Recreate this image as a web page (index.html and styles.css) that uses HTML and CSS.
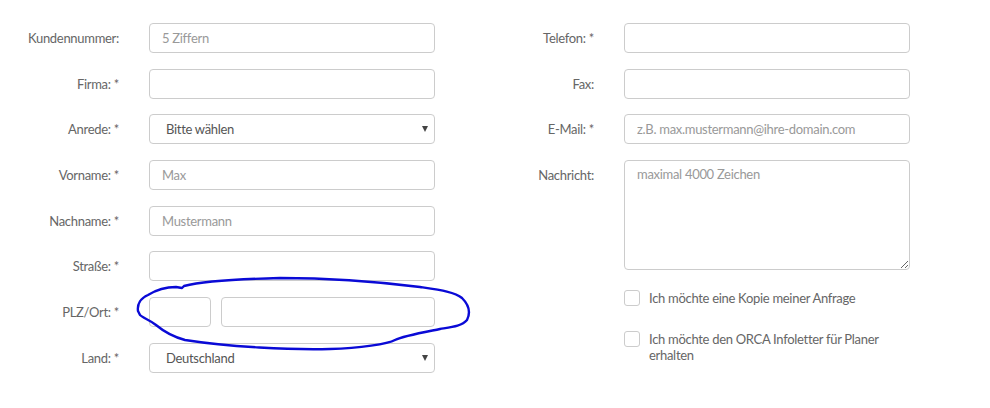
FILE: index.html
```html
<!DOCTYPE html>
<html lang="de">
<head>
    <meta charset="UTF-8">
    <title>Kontaktformular</title>
    <link rel="stylesheet" href="styles.css">
</head>
<body>
<form class="contact-form">
    <div class="form-col">
        <label class="form-label" for="kdnr">Kundennummer:</label>
        <input class="form-input" id="kdnr" type="text" placeholder="5 Ziffern">

        <label class="form-label" for="firma">Firma: *</label>
        <input class="form-input" id="firma" type="text">

        <label class="form-label" for="anrede">Anrede: *</label>
        <div class="select-wrap">
            <select class="form-input form-select" id="anrede">
                <option>Bitte wählen</option>
                <option>Herr</option>
                <option>Frau</option>
            </select>
        </div>

        <label class="form-label" for="vorname">Vorname: *</label>
        <input class="form-input" id="vorname" type="text" placeholder="Max">

        <label class="form-label" for="nachname">Nachname: *</label>
        <input class="form-input" id="nachname" type="text" placeholder="Mustermann">

        <label class="form-label" for="strasse">Straße: *</label>
        <input class="form-input" id="strasse" type="text">

        <label class="form-label" for="plz">PLZ/Ort: *</label>
        <div class="plz-ort">
            <input class="form-input plz" id="plz" type="text">
            <input class="form-input" id="ort" type="text">
        </div>

        <label class="form-label" for="land">Land: *</label>
        <div class="select-wrap">
            <select class="form-input form-select" id="land">
                <option>Deutschland</option>
                <option>Österreich</option>
                <option>Schweiz</option>
            </select>
        </div>
    </div>

    <div class="form-col">
        <label class="form-label" for="telefon">Telefon: *</label>
        <input class="form-input" id="telefon" type="text">

        <label class="form-label" for="fax">Fax:</label>
        <input class="form-input" id="fax" type="text">

        <label class="form-label" for="email">E-Mail: *</label>
        <input class="form-input" id="email" type="email" placeholder="z.B. max.mustermann@ihre-domain.com">

        <label class="form-label" for="nachricht">Nachricht:</label>
        <textarea class="form-input form-textarea" id="nachricht" placeholder="maximal 4000 Zeichen"></textarea>

        <div class="checks">
            <label class="check-row">
                <input class="check-box" type="checkbox">
                <span>Ich möchte eine Kopie meiner Anfrage</span>
            </label>
            <label class="check-row">
                <input class="check-box" type="checkbox">
                <span>Ich möchte den ORCA Infoletter für Planer erhalten</span>
            </label>
        </div>
    </div>

    <!-- hand-drawn marker around PLZ/Ort -->
    <svg class="scribble" width="990" height="408" viewBox="0 0 990 408">
        <path d="M138 311 C137 304 141 298 148 295 C156 290 166 287 176 287 L182 288 L184 286
                 C200 282 240 279 280 278 C330 278 380 282 420 287 C440 290 455 292 462 298
                 C468 304 471 312 467 320 C462 326 452 327 440 329 C420 333 403 336 395 340
                 C388 344 360 348 330 349 C290 350 230 347 185 340 C170 336 162 330 156 325
                 C150 320 143 318 140 315 Z"
              fill="none" stroke="#0a0ad6" stroke-width="2.4" stroke-linecap="round" stroke-linejoin="round"/>
    </svg>
</form>
</body>
</html>
```

FILE: styles.css
```css
body {
    margin: 0;
    font-family: Lato, "Liberation Sans", sans-serif;
    font-size: 13px;
    letter-spacing: -0.3px;
    color: #666;
    background: #fff;
}

.contact-form {
    position: relative;
    display: flex;
    gap: 40px;
    padding-top: 23px;
    width: 990px;
    height: 408px;
    box-sizing: border-box;
}

.form-col {
    display: grid;
    grid-template-columns: 119px 286px;
    column-gap: 30px;
    row-gap: 15.7px;
    align-content: start;
}

.form-label {
    text-align: right;
    line-height: 30px;
    white-space: nowrap;
}

.form-input {
    box-sizing: border-box;
    width: 100%;
    height: 30px;
    margin: 0;
    padding: 0 12px;
    border: 1px solid #ccc;
    border-radius: 4px;
    background: #fff;
    font-family: inherit;
    font-size: 13px;
    letter-spacing: -0.3px;
    color: #555;
    outline: none;
}

.form-input::placeholder {
    color: #999;
}

.select-wrap {
    position: relative;
}

.form-select {
    appearance: none;
    -webkit-appearance: none;
    padding-left: 16px;
}

.select-wrap::after {
    content: "";
    position: absolute;
    right: 7px;
    top: 12px;
    border-left: 3.5px solid transparent;
    border-right: 3.5px solid transparent;
    border-top: 6px solid #444;
    pointer-events: none;
}

.plz-ort {
    display: flex;
    gap: 10px;
}

.plz-ort .plz {
    width: 62px;
    flex: none;
}

.form-textarea {
    height: 110px;
    padding: 5px 12px;
    resize: vertical;
    line-height: 16px;
}

.checks {
    grid-column: 2;
    display: flex;
    flex-direction: column;
    gap: 25px;
    padding-top: 4px;
}

.check-row {
    display: flex;
    align-items: flex-start;
    gap: 9px;
    line-height: 16px;
}

.check-box {
    appearance: none;
    -webkit-appearance: none;
    flex: none;
    width: 16px;
    height: 16px;
    margin: 0;
    border: 1px solid #ccc;
    border-radius: 3px;
    background: #fff;
}

.check-row span {
    max-width: 250px;
}

.scribble {
    position: absolute;
    left: 0;
    top: 0;
    pointer-events: none;
}
```
